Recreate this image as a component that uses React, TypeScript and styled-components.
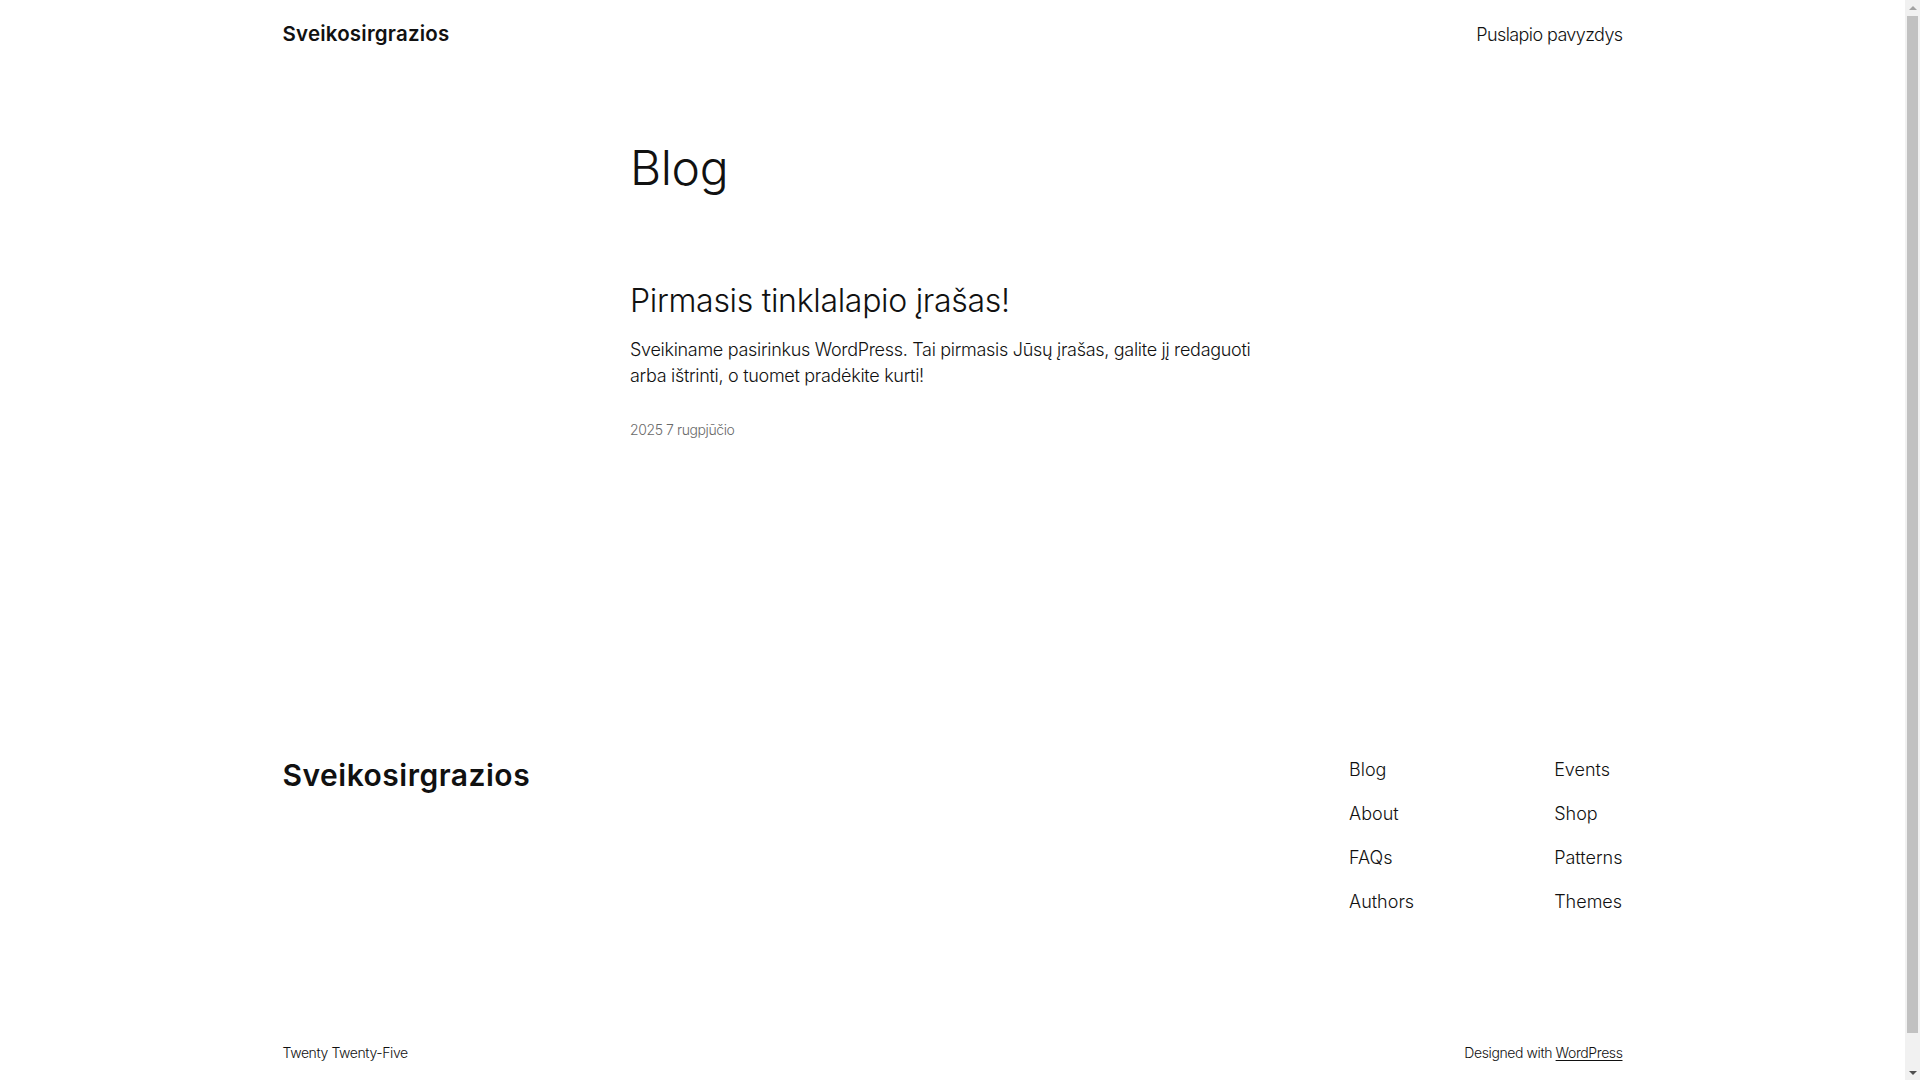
import styled, { createGlobalStyle } from "styled-components";

const GlobalStyle = createGlobalStyle`
  html, body {
    margin: 0;
    padding: 0;
    background: #ffffff;
  }
  body {
    font-family: Inter, "Noto Sans", "Liberation Sans", sans-serif;
    font-weight: 300;
    color: #111111;
    -webkit-font-smoothing: antialiased;
  }
  a {
    color: inherit;
    text-decoration: none;
  }
`;

// the page is laid out as if a 15px classic scrollbar took the right edge
const Page = styled.div`
  display: flex;
  flex-direction: column;
  min-height: 100vh;
  padding-right: 15px;
`;

const Wide = styled.div`
  width: 1340px;
  margin: 0 auto;
`;

const Header = styled(Wide)`
  display: flex;
  align-items: center;
  justify-content: space-between;
  padding: 22px 0;
`;

const SiteTitle = styled.a<{ size: number; spacing: number }>`
  font-size: ${(p) => p.size}px;
  font-weight: 600;
  line-height: 1.2;
  letter-spacing: ${(p) => p.spacing}px;
  color: #111111;
`;

const NavLink = styled.a<{ tight?: boolean }>`
  font-size: 18px;
  line-height: 25px;
  font-weight: 300;
  letter-spacing: ${(p) => (p.tight ? "-0.6px" : "0")};
`;

const Main = styled.main`
  width: 645px;
  margin: 0 auto;
  padding-top: 70px;
`;

const PageTitle = styled.h1`
  margin: 0;
  font-size: 48px;
  line-height: 1.2;
  font-weight: 300;
  letter-spacing: -0.4px;
`;

const Post = styled.article`
  margin-top: 85px;
`;

const PostTitle = styled.h2`
  margin: 0;
  font-size: 32px;
  line-height: 1.2;
  font-weight: 300;
  letter-spacing: -0.3px;
`;

const Excerpt = styled.p`
  margin: 17px 0 0;
  font-size: 18px;
  line-height: 26px;
  letter-spacing: -0.3px;
`;

const PostDate = styled.time`
  display: block;
  margin-top: 30px;
  font-size: 14px;
  line-height: 21px;
  color: #6a6a6a;
  letter-spacing: -0.4px;
`;

const Footer = styled(Wide)`
  margin-top: 317px;
  padding-bottom: 60px;
`;

const FooterTop = styled.div`
  display: flex;
  justify-content: space-between;
  align-items: flex-start;
`;

const FooterNav = styled.nav`
  display: flex;
  gap: 140px;
`;

const NavColumn = styled.ul`
  list-style: none;
  margin: 0;
  padding: 0;
  display: flex;
  flex-direction: column;
  gap: 19px;
`;

const FooterBottom = styled.div`
  display: flex;
  justify-content: space-between;
  align-items: center;
  margin-top: 128px;
  font-size: 14px;
  line-height: 21px;
  letter-spacing: -0.4px;
`;

const Underlined = styled.a`
  text-decoration: underline;
  text-underline-offset: 2px;
`;

const ScrollTrack = styled.div`
  position: fixed;
  top: 0;
  right: 0;
  width: 15px;
  height: 100vh;
  background: #f1f1f1;
  display: flex;
  flex-direction: column;
`;

const ScrollArrow = styled.div<{ dir: "up" | "down" }>`
  height: 15px;
  display: flex;
  align-items: center;
  justify-content: center;

  &::after {
    content: "";
    width: 0;
    height: 0;
    border-left: 4px solid transparent;
    border-right: 4px solid transparent;
    ${(p) =>
      p.dir === "up"
        ? "border-bottom: 4px solid #a3a3a3;"
        : "border-top: 4px solid #505050;"}
  }
`;

const ScrollThumb = styled.div`
  flex: 1;
  margin: 1px 2px 32px;
  background: #c1c1c1;
`;

const leftLinks = ["Blog", "About", "FAQs", "Authors"];
const rightLinks = ["Events", "Shop", "Patterns", "Themes"];

export default function App() {
  return (
    <>
      <GlobalStyle />
      <Page>
        <Header as="header">
          <SiteTitle href="#" size={20.5} spacing={0.2}>
            Sveikosirgrazios
          </SiteTitle>
          <NavLink href="#" tight>
            Puslapio pavyzdys
          </NavLink>
        </Header>

        <Main>
          <PageTitle>Blog</PageTitle>
          <Post>
            <PostTitle>Pirmasis tinklalapio įrašas!</PostTitle>
            <Excerpt>
              Sveikiname pasirinkus WordPress. Tai pirmasis Jūsų įrašas, galite
              jį redaguoti arba ištrinti, o tuomet pradėkite kurti!
            </Excerpt>
            <PostDate>2025 7 rugpjūčio</PostDate>
          </Post>
        </Main>

        <Footer as="footer">
          <FooterTop>
            <SiteTitle href="#" size={30} spacing={0.5}>
              Sveikosirgrazios
            </SiteTitle>
            <FooterNav>
              <NavColumn>
                {leftLinks.map((l) => (
                  <li key={l}>
                    <NavLink href="#">{l}</NavLink>
                  </li>
                ))}
              </NavColumn>
              <NavColumn>
                {rightLinks.map((l) => (
                  <li key={l}>
                    <NavLink href="#">{l}</NavLink>
                  </li>
                ))}
              </NavColumn>
            </FooterNav>
          </FooterTop>
          <FooterBottom>
            <span>Twenty Twenty-Five</span>
            <span>
              Designed with <Underlined href="#">WordPress</Underlined>
            </span>
          </FooterBottom>
        </Footer>
      </Page>

      <ScrollTrack aria-hidden>
        <ScrollArrow dir="up" />
        <ScrollThumb />
        <ScrollArrow dir="down" />
      </ScrollTrack>
    </>
  );
}
